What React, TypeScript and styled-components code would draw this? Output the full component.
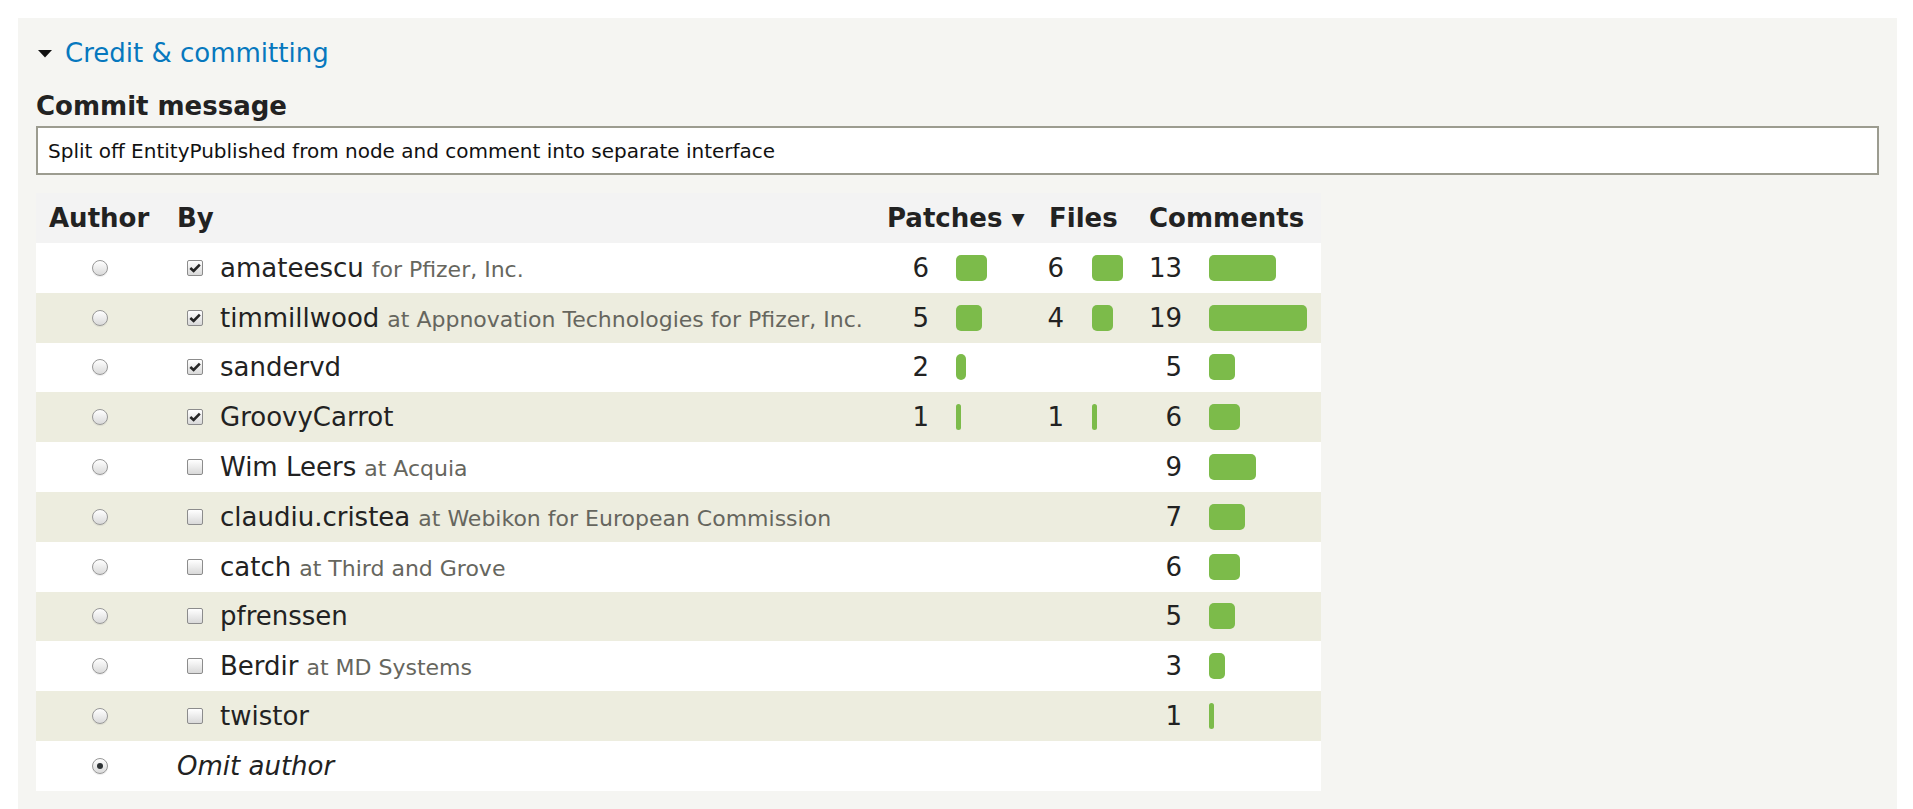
import React from "react";
import styled, { createGlobalStyle } from "styled-components";

const GlobalStyle = createGlobalStyle`
  html, body { margin: 0; padding: 0; background: #ffffff; }
  body { font-family: "DejaVu Sans", "Liberation Sans", sans-serif; color: #222222; }
`;

const Page = styled.div`
  padding: 18px 16px 0 18px;
`;

const Panel = styled.section`
  background: #f5f5f2;
  padding: 16px 18px 30px 18px;
  min-height: 820px;
  box-sizing: border-box;
`;

const Summary = styled.div`
  display: flex;
  align-items: center;
  gap: 13px;
  height: 39px;
  padding-left: 2px;
  font-size: 26px;
  color: #0678be;
  line-height: 39px;
`;

const Label = styled.div`
  margin-top: 14px;
  font-size: 26px;
  font-weight: bold;
  line-height: 39px;
  color: #222222;
`;

const TextInput = styled.input`
  display: block;
  width: 100%;
  box-sizing: border-box;
  height: 49px;
  border: 2px solid #9c9c90;
  background: #ffffff;
  padding: 0 10px;
  font-family: "DejaVu Sans", sans-serif;
  font-size: 20px;
  color: #111111;
  outline: none;
`;

const Table = styled.div`
  margin-top: 18px;
  width: 1285px;
  display: grid;
  grid-template-columns: 128px 1fr 65px 97px 38px 62px 56px 129px;
  grid-template-rows: 50px;
  grid-auto-rows: 49.8px;
`;

const HeadCell = styled.div<{ $span?: number }>`
  grid-column: span ${(p) => p.$span ?? 1};
  background: #f3f3f3;
  display: flex;
  align-items: center;
  padding-left: 13px;
  font-size: 26px;
  font-weight: bold;
  color: #222222;
  white-space: nowrap;
`;

const SortArrow = styled.span`
  font-size: 17px;
  margin-left: 9px;
  position: relative;
  top: 1px;
`;

const Cell = styled.div<{ $alt: boolean }>`
  background: ${(p) => (p.$alt ? "#ededdf" : "#ffffff")};
  display: flex;
  align-items: center;
  font-size: 26px;
  color: #222222;
  white-space: nowrap;
  min-width: 0;
`;

const RadioCell = styled(Cell)`
  justify-content: center;
`;

const NameCell = styled(Cell)`
  padding-left: 23px;
  gap: 17px;
`;

const NumCell = styled(Cell)`
  justify-content: flex-end;
  padding-right: 10px;
`;

const BarCell = styled(Cell)<{ $pad: number }>`
  padding-left: ${(p) => p.$pad}px;
`;

const OmitCell = styled(Cell)`
  grid-column: span 7;
  padding-left: 13px;
  font-style: italic;
`;

const Bar = styled.div`
  height: 26px;
  border-radius: 5px;
  background: #7cbb4a;
`;

const Radio = styled.span<{ $checked?: boolean }>`
  width: 14px;
  height: 14px;
  border-radius: 50%;
  border: 1px solid #989898;
  background: linear-gradient(#ffffff, #dadada);
  box-shadow: 0 1px 1px rgba(0, 0, 0, 0.08);
  display: flex;
  align-items: center;
  justify-content: center;
  &::after {
    content: "";
    display: ${(p) => (p.$checked ? "block" : "none")};
    width: 6px;
    height: 6px;
    border-radius: 50%;
    background: #2f3336;
  }
`;

const Checkbox = styled.span`
  width: 14px;
  height: 14px;
  border: 1px solid #8c8c8c;
  border-radius: 2px;
  background: linear-gradient(#ffffff, #d9d9d9);
  display: flex;
  align-items: center;
  justify-content: center;
  flex: none;
`;

const Name = styled.span`
  font-size: 26px;
  color: #222222;
`;

const Affil = styled.span`
  font-size: 22px;
  color: #66665e;
  margin-left: 8px;
`;

type Person = {
  name: string;
  affil?: string;
  checked: boolean;
  patches?: number;
  files?: number;
  comments?: number;
};

const people: Person[] = [
  { name: "amateescu", affil: "for Pfizer, Inc.", checked: true, patches: 6, files: 6, comments: 13 },
  { name: "timmillwood", affil: "at Appnovation Technologies for Pfizer, Inc.", checked: true, patches: 5, files: 4, comments: 19 },
  { name: "sandervd", checked: true, patches: 2, comments: 5 },
  { name: "GroovyCarrot", checked: true, patches: 1, files: 1, comments: 6 },
  { name: "Wim Leers", affil: "at Acquia", checked: false, comments: 9 },
  { name: "claudiu.cristea", affil: "at Webikon for European Commission", checked: false, comments: 7 },
  { name: "catch", affil: "at Third and Grove", checked: false, comments: 6 },
  { name: "pfrenssen", checked: false, comments: 5 },
  { name: "Berdir", affil: "at MD Systems", checked: false, comments: 3 },
  { name: "twistor", checked: false, comments: 1 },
];

const UNIT = 5.17;

const Check = () => (
  <svg width="12" height="10" viewBox="0 0 12 10">
    <path d="M1.3 5 L4.6 8 L10.8 1.6" fill="none" stroke="#262626" strokeWidth="2.6" />
  </svg>
);

const Triangle = () => (
  <svg width="14" height="8" viewBox="0 0 14 8">
    <path d="M0 0 H14 L7 7.5 Z" fill="#111111" />
  </svg>
);

function Stat({ value, alt, pad }: { value?: number; alt: boolean; pad: number }) {
  return (
    <>
      <NumCell $alt={alt}>{value ?? ""}</NumCell>
      <BarCell $alt={alt} $pad={pad}>
        {value ? <Bar style={{ width: `${value * UNIT}px` }} /> : null}
      </BarCell>
    </>
  );
}

export default function App() {
  return (
    <>
      <GlobalStyle />
      <Page>
        <Panel>
          <Summary>
            <Triangle />
            <span>Credit &amp; committing</span>
          </Summary>
          <Label>Commit message</Label>
          <TextInput
            readOnly
            value="Split off EntityPublished from node and comment into separate interface"
          />
          <Table>
            <HeadCell>Author</HeadCell>
            <HeadCell>By</HeadCell>
            <HeadCell $span={2}>
              Patches<SortArrow>▼</SortArrow>
            </HeadCell>
            <HeadCell $span={2}>Files</HeadCell>
            <HeadCell $span={2}>Comments</HeadCell>
            {people.map((p, i) => {
              const alt = i % 2 === 1;
              return (
                <React.Fragment key={p.name}>
                  <RadioCell $alt={alt}>
                    <Radio />
                  </RadioCell>
                  <NameCell $alt={alt}>
                    <Checkbox>{p.checked ? <Check /> : null}</Checkbox>
                    <span>
                      <Name>{p.name}</Name>
                      {p.affil ? <Affil>{p.affil}</Affil> : null}
                    </span>
                  </NameCell>
                  <Stat value={p.patches} alt={alt} pad={17} />
                  <Stat value={p.files} alt={alt} pad={18} />
                  <Stat value={p.comments} alt={alt} pad={17} />
                </React.Fragment>
              );
            })}
            <RadioCell $alt={false}>
              <Radio $checked />
            </RadioCell>
            <OmitCell $alt={false}>Omit author</OmitCell>
          </Table>
        </Panel>
      </Page>
    </>
  );
}
